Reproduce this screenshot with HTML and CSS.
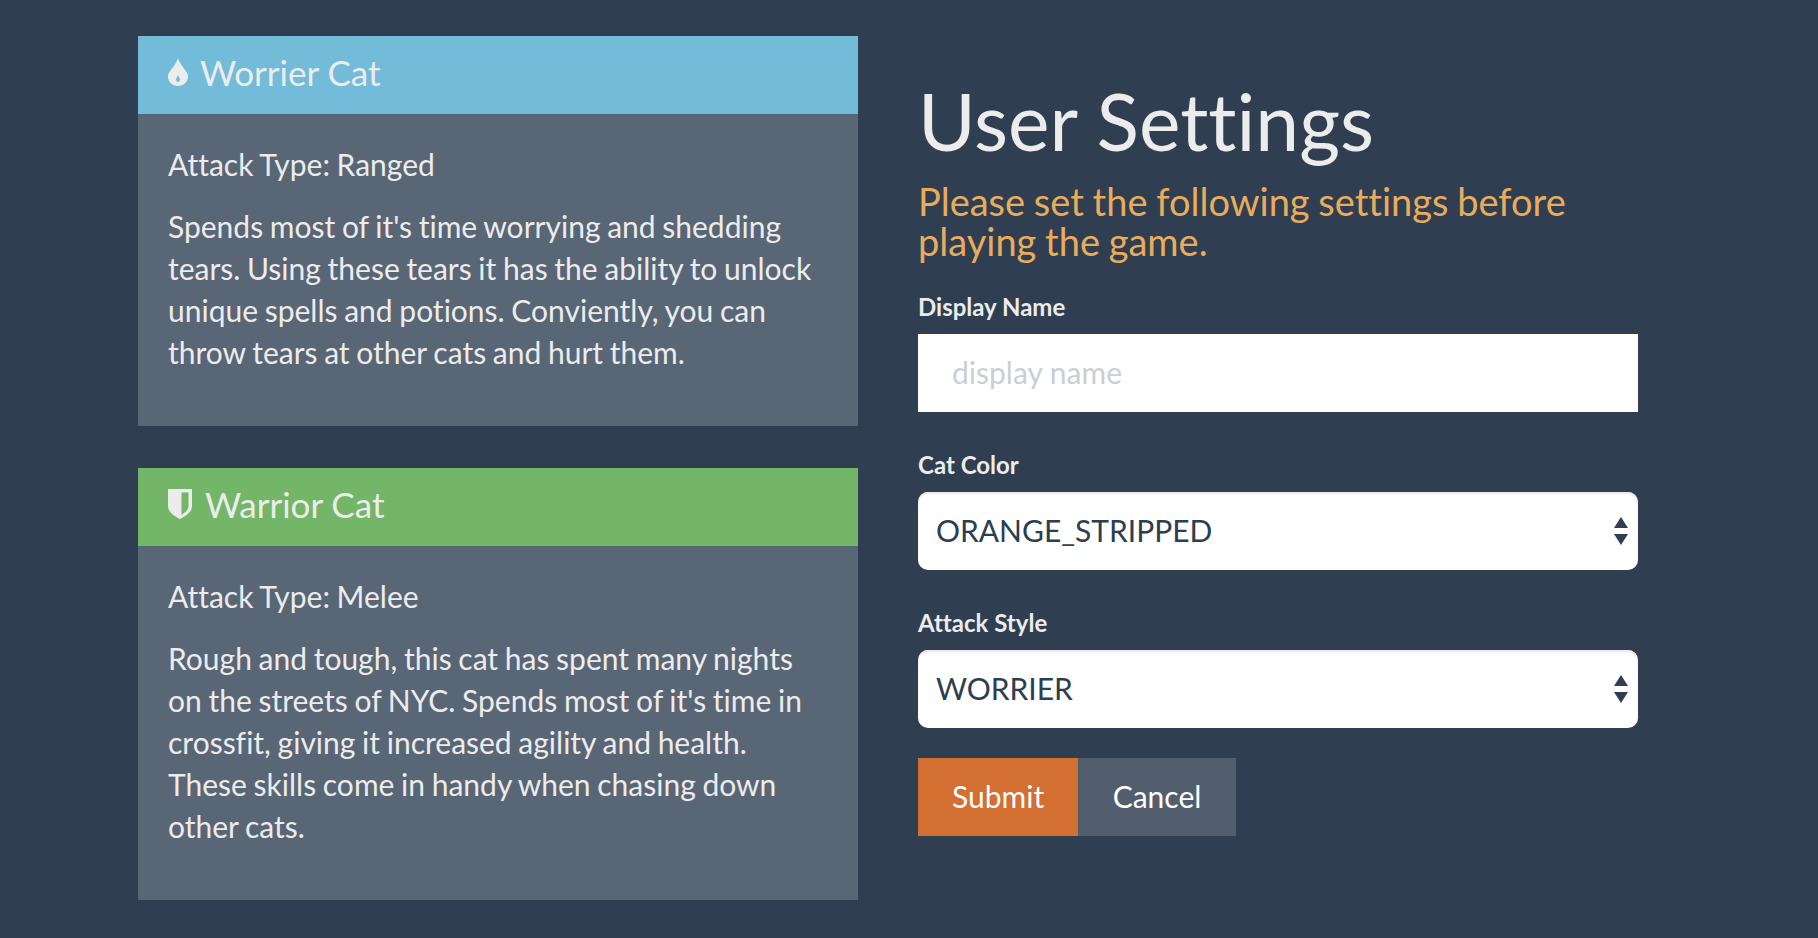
FILE: index.html
```html
<!DOCTYPE html>
<html>
  <head>
    <title>User Settings</title>
    <meta charset="utf-8" />
    <link rel="stylesheet" href="styles.css">
  </head>
  <body>
    <div class="page">
      <div class="cats">
        <div class="panel">
          <div class="panel-head worrier">
            <svg class="icon" viewBox="0 0 20 28"><path fill-rule="evenodd" d="M10 0C11 4 13.500 7 16 10.500C18.500 13.800 20 15.800 20 18.500C20 24 15.500 28 10 28C4.500 28 0 24 0 18.500C0 15.800 1.500 13.800 4 10.500C6.500 7 9 4 10 0ZM10 17C9.500 19 8 20 8 21.800C8 23 8.900 24 10 24C11.100 24 12 23 12 21.800C12 20 10.500 19 10 17Z"/></svg>
            Worrier Cat
          </div>
          <div class="panel-body">
            <p>Attack Type: Ranged</p>
            <p>Spends most of it's time worrying and shedding tears. Using these tears it has the ability to unlock unique spells and potions. Conviently, you can throw tears at other cats and hurt them.</p>
          </div>
        </div>
        <div class="panel">
          <div class="panel-head warrior">
            <svg class="icon shield" viewBox="0 0 24 30"><path fill-rule="evenodd" d="M0 0H24V17C24 23 18 27 12 30C6 27 0 23 0 17ZM13.500 3.500V25.800C17.500 23.500 20.500 20.800 20.500 16.800V3.500Z"/></svg>
            Warrior Cat
          </div>
          <div class="panel-body">
            <p>Attack Type: Melee</p>
            <p>Rough and tough, this cat has spent many nights on the streets of NYC. Spends most of it's time in crossfit, giving it increased agility and health. These skills come in handy when chasing down other cats.</p>
          </div>
        </div>
      </div>
      <div class="settings">
        <h1>User Settings</h1>
        <h4>Please set the following settings before playing the game.</h4>
        <form>
          <div class="field">
            <label for="name">Display Name</label>
            <input id="name" type="text" placeholder="display name">
          </div>
          <div class="field">
            <label for="color">Cat Color</label>
            <div class="select-wrap">
              <select id="color"><option>ORANGE_STRIPPED</option></select>
              <svg class="arrows" viewBox="0 0 14 28"><path d="M7 0L14 11H0ZM0 17H14L7 28Z"/></svg>
            </div>
          </div>
          <div class="field last">
            <label for="style">Attack Style</label>
            <div class="select-wrap">
              <select id="style"><option>WORRIER</option></select>
              <svg class="arrows" viewBox="0 0 14 28"><path d="M7 0L14 11H0ZM0 17H14L7 28Z"/></svg>
            </div>
          </div>
          <div class="buttons">
            <button type="button" class="btn submit">Submit</button>
            <button type="button" class="btn cancel">Cancel</button>
          </div>
        </form>
      </div>
    </div>
  </body>
</html>
```

FILE: styles.css
```css
*{
	margin:0px;
	padding:0px;
	box-sizing:border-box;
}
body{
	background-color:#2f3e50;
	font-family:Lato,"Liberation Sans",sans-serif;
	font-size:30px;
	line-height:42px;
	color:#ececec;
	font-variant-ligatures:none;
}
.page{
	display:grid;
	grid-template-columns:720px 720px;
	column-gap:60px;
	padding:36px 0 0 138px;
}
.panel{
	background-color:#596676;
	margin-bottom:42px;
}
.panel-head{
	height:78px;
	padding:0 30px 6px;
	display:flex;
	align-items:center;
	gap:12px;
	font-size:35px;
}
.worrier{
	background-color:#72bcd9;
}
.warrior{
	background-color:#74b668;
}
.icon{
	width:20px;
	height:28px;
	fill:#ececec;
}
.shield{
	width:24px;
	height:30px;
	margin-right:1px;
}
.panel-body{
	padding:29px 30px 33px;
	word-spacing:-1px;
}
.panel-body p{
	margin-bottom:20px;
}
.settings{
	padding-top:42px;
}
h1{
	font-size:78.600px;
	font-weight:400;
	line-height:86px;
	margin-bottom:17px;
}
h4{
	font-size:38px;
	font-weight:400;
	line-height:40px;
	word-spacing:-1px;
	color:#e8ad5c;
	margin-bottom:30px;
}
.field{
	margin-bottom:37px;
}
.last{
	margin-bottom:30px;
}
label{
	display:block;
	font-size:24px;
	font-weight:700;
	line-height:32px;
	margin-bottom:11px;
}
input,select{
	display:block;
	width:100%;
	height:78px;
	border:0;
	background-color:#fff;
	font-family:inherit;
	font-size:30px;
	color:#2c3e50;
	font-variant-ligatures:none;
}
input{
	padding:0 34px 2px;
	outline:0;
}
input::placeholder{
	color:#cacfd2;
}
select{
	appearance:none;
	padding:0 18px 2px;
	border-radius:10px;
	box-shadow:inset 0 2px 2px #e8e8e8;
}
.select-wrap{
	position:relative;
}
.arrows{
	position:absolute;
	right:10px;
	top:25px;
	width:14px;
	height:28px;
	fill:#2f3e50;
}
.buttons{
	display:flex;
}
.btn{
	height:78px;
	border:0;
	font-family:inherit;
	font-size:30px;
	color:#fff;
	padding:0 34px 2px;
}
.submit{
	background-color:#d26f31;
}
.cancel{
	background-color:#525e6e;
	padding:0 34.500px 2px;
}
```
